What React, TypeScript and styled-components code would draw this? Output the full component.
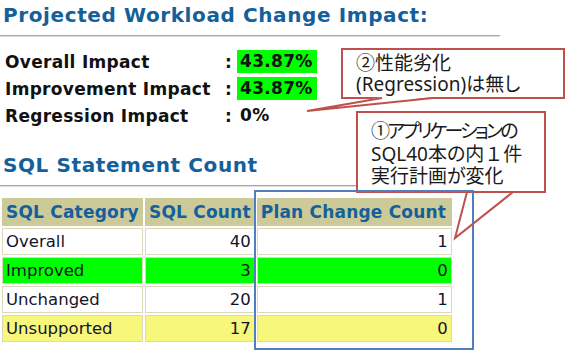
import React from "react";
import styled, { createGlobalStyle } from "styled-components";

const Global = createGlobalStyle`
  html, body { margin: 0; padding: 0; background: #ffffff; }
  body { font-family: "DejaVu Sans", Verdana, sans-serif; }
`;

const Page = styled.div`
  position: relative;
  width: 566px;
  height: 351px;
  overflow: hidden;
  background: #ffffff;
`;

const Heading = styled.h2<{ $top: number }>`
  margin: ${(p) => p.$top}px 0 0 3px;
  font-size: 20px;
  line-height: 24px;
  font-weight: bold;
  letter-spacing: 0.6px;
  color: #14609a;
  white-space: nowrap;
`;

const Rule = styled.div`
  width: 500px;
  height: 0;
  margin-top: 8px;
  border-top: 1px solid #a8a8a8;
  border-bottom: 1px solid #dcdcdc;
`;

const ImpactGrid = styled.div`
  display: grid;
  grid-template-columns: 222px 10px auto;
  grid-auto-rows: 27px;
  margin: 11px 0 0 5px;
  align-items: center;
  font-size: 17px;
  font-weight: bold;
  letter-spacing: 0.3px;
  color: #111111;
`;

const ImpactLabel = styled.div`
  white-space: nowrap;
`;

const Colon = styled.div`
  margin-left: -2px;
`;

const ImpactValue = styled.div<{ $hl?: boolean }>`
  justify-self: start;
  height: 23px;
  line-height: 23px;
  padding: 0 4px 0 3px;
  background: ${(p) => (p.$hl ? "#00ff00" : "transparent")};
`;

const Table = styled.table`
  margin-top: 9px;
  border-collapse: separate;
  border-spacing: 2px;
  font-size: 16.5px;
  color: #141428;
`;

const Th = styled.th<{ $w: number }>`
  width: ${(p) => p.$w}px;
  box-sizing: border-box;
  height: 28px;
  padding: 0 3px;
  background: #cdca9a;
  border: 1px solid #cdca9a;
  color: #14609a;
  font-size: 17px;
  font-weight: bold;
  text-align: left;
  white-space: nowrap;
  letter-spacing: 0.2px;
`;

type Tone = "white" | "green" | "yellow";
const toneBg: Record<Tone, string> = {
  white: "#ffffff",
  green: "#00ff00",
  yellow: "#f7f77c",
};

const Td = styled.td<{ $tone: Tone; $num?: boolean }>`
  height: 27px;
  box-sizing: border-box;
  padding: 0 3px;
  background: ${(p) => toneBg[p.$tone]};
  border: 1px solid #dcd8bb;
  text-align: ${(p) => (p.$num ? "right" : "left")};
  white-space: nowrap;
`;

const Highlight = styled.div`
  position: absolute;
  left: 254px;
  top: 190px;
  width: 220px;
  height: 160px;
  box-sizing: border-box;
  border: 2px solid #4f7fbd;
`;

const Callout = styled.div<{ $l: number; $t: number; $w: number; $h: number; $lh: number; $pt: number }>`
  position: absolute;
  left: ${(p) => p.$l}px;
  top: ${(p) => p.$t}px;
  width: ${(p) => p.$w}px;
  height: ${(p) => p.$h}px;
  box-sizing: border-box;
  border: 2px solid #c0504d;
  background: #ffffff;
  padding: ${(p) => p.$pt}px 0 0 13px;
  font-family: "Noto Sans", "Noto Sans CJK JP", sans-serif;
  font-feature-settings: "palt";
  font-size: 19px;
  line-height: ${(p) => p.$lh}px;
  color: #1a1a1a;
  white-space: nowrap;
`;

const Kana = styled.span`
  letter-spacing: -2.8px;
`;

const FullWidth = styled.span`
  font-feature-settings: normal;
`;

const Tails = styled.svg`
  position: absolute;
  left: 0;
  top: 0;
  pointer-events: none;
`;

const rows: { cat: string; count: number; plan: number; tone: Tone }[] = [
  { cat: "Overall", count: 40, plan: 1, tone: "white" },
  { cat: "Improved", count: 3, plan: 0, tone: "green" },
  { cat: "Unchanged", count: 20, plan: 1, tone: "white" },
  { cat: "Unsupported", count: 17, plan: 0, tone: "yellow" },
];

export default function App() {
  return (
    <Page>
      <Global />
      <Heading $top={3}>Projected Workload Change Impact:</Heading>
      <Rule />
      <ImpactGrid>
        <ImpactLabel>Overall Impact</ImpactLabel>
        <Colon>:</Colon>
        <ImpactValue $hl>43.87%</ImpactValue>
        <ImpactLabel>Improvement Impact</ImpactLabel>
        <Colon>:</Colon>
        <ImpactValue $hl>43.87%</ImpactValue>
        <ImpactLabel>Regression Impact</ImpactLabel>
        <Colon>:</Colon>
        <ImpactValue>0%</ImpactValue>
      </ImpactGrid>
      <Heading $top={24}>SQL Statement Count</Heading>
      <Rule />
      <Table>
        <thead>
          <tr>
            <Th $w={141}>SQL Category</Th>
            <Th $w={109}>SQL Count</Th>
            <Th $w={195}>Plan Change Count</Th>
          </tr>
        </thead>
        <tbody>
          {rows.map((r) => (
            <tr key={r.cat}>
              <Td $tone={r.tone}>{r.cat}</Td>
              <Td $tone={r.tone} $num>
                {r.count}
              </Td>
              <Td $tone={r.tone} $num>
                {r.plan}
              </Td>
            </tr>
          ))}
        </tbody>
      </Table>

      <Callout $l={341} $t={48} $w={224} $h={51} $lh={21} $pt={3}>
        ②性能劣化
        <br />
        (Regression)は無し
      </Callout>
      <Callout $l={356} $t={111} $w={190} $h={82} $lh={22.5} $pt={7}>
        <Kana>①アプリケーションの</Kana>
        <br />
        SQL40本の内<FullWidth>１</FullWidth>件
        <br />
        実行計画が変化
      </Callout>
      <Highlight />
      <Tails width={566} height={351} viewBox="0 0 566 351">
        <polygon points="382,97 307,111 433,97" fill="#ffffff" />
        <polyline points="382,98 307,111 433,98" fill="none" stroke="#c0504d" strokeWidth={2} />
        <polyline points="467,192 455,238 513,192" fill="none" stroke="#c0504d" strokeWidth={2} />
      </Tails>
    </Page>
  );
}
